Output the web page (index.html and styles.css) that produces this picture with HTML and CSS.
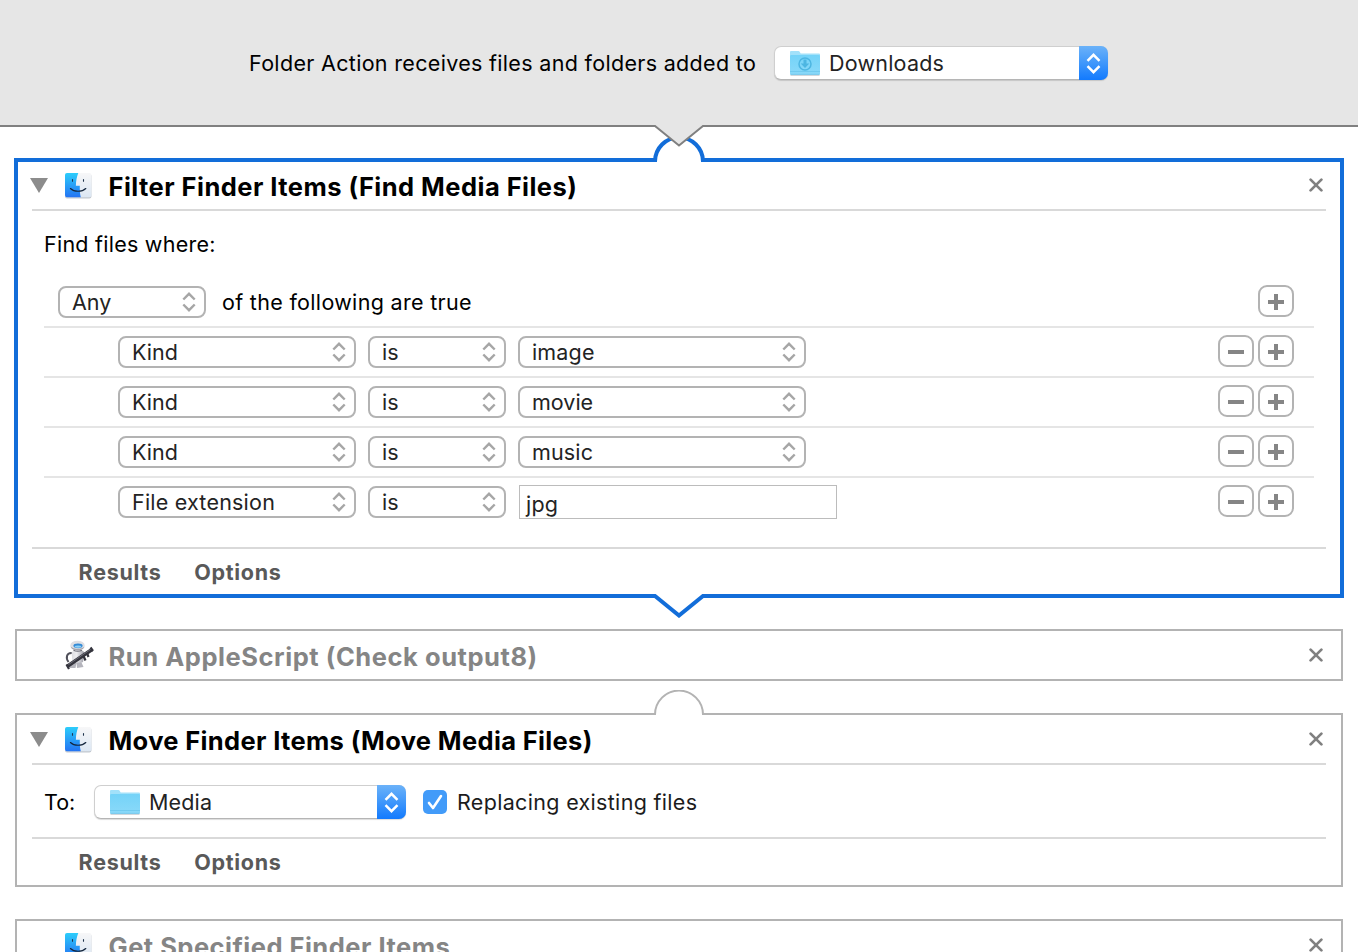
FILE: index.html
```html
<!DOCTYPE html>
<html lang="en">
<head>
<meta charset="utf-8">
<title>Folder Action workflow</title>
<link rel="stylesheet" href="styles.css">
</head>
<body>
<svg class="defs" aria-hidden="true">
  <defs>
    <linearGradient id="gBlue" x1="0" y1="0" x2="0" y2="1"><stop offset="0" stop-color="#2ccdfb"/><stop offset="1" stop-color="#2474f3"/></linearGradient>
    <linearGradient id="gPale" x1="0" y1="0" x2="0" y2="1"><stop offset="0" stop-color="#f7f7f8"/><stop offset="1" stop-color="#dce7f3"/></linearGradient>
    <linearGradient id="gFolder" x1="0" y1="0" x2="0" y2="1"><stop offset="0" stop-color="#74d3f8"/><stop offset="1" stop-color="#8ad9f9"/></linearGradient>
    <linearGradient id="gBody" x1="0" y1="0" x2="1" y2="0"><stop offset="0" stop-color="#dcdce0"/><stop offset=".4" stop-color="#ededf0"/><stop offset="1" stop-color="#9a9aa4"/></linearGradient>
    <symbol id="finder" viewBox="0 0 28 27">
      <rect x="1" y="1.800" width="26.400" height="24.600" rx="2" fill="#a9b1ba" opacity=".7"/>
      <rect x="1" y="1" width="26.400" height="24.200" rx="2" fill="url(#gPale)"/>
      <path d="M3 1H14.300C12.700 5 12 9 11.900 13.800H15.800C15.700 18 15.900 21.500 16.800 25.200H3A2 2 0 0 1 1 23.200V3A2 2 0 0 1 3 1Z" fill="url(#gBlue)"/>
      <path d="M8.500 7.500V9.300M19.500 7.500V9.300" stroke="#20344d" stroke-width="1.100" stroke-linecap="round"/>
      <path d="M6.400 16.500C10.200 20.200 18 20.200 21.800 16.500" fill="none" stroke="#14263d" stroke-width="1.100" stroke-linecap="round"/>
    </symbol>
    <symbol id="robot" viewBox="0 0 30 30">
      <path d="M8 13C2.500 12.500 1.500 18 4.500 22" fill="none" stroke="#50505a" stroke-width="2"/>
      <path d="M7.500 12.500C9 9.500 18 9 20.500 12.500L19 22Q13 25 8.500 22Z" fill="url(#gBody)"/>
      <path d="M7 23H12.500L11.500 28H5.500ZM12.500 22.500H17.500L19.500 27L13 28Z" fill="#b4b4bc"/>
      <path d="M9.500 10.300Q13.500 12.200 18 10.300" fill="none" stroke="#6f6f78" stroke-width="1.200"/>
      <ellipse cx="13.500" cy="5.500" rx="7.200" ry="4.800" fill="#dfdfe3"/>
      <path d="M6.500 6.500C8 12 19 12 20.500 6.500C17.500 9.800 10 9.800 6.500 6.500Z" fill="#a5a5ad"/>
      <ellipse cx="14" cy="5.800" rx="4.600" ry="2.400" fill="#328ad6"/>
      <ellipse cx="14" cy="6.600" rx="3.300" ry="1.200" fill="#8fd0f5"/>
      <path d="M3 26.500L28 9.500" stroke="#34343d" stroke-width="3.800"/>
      <path d="M2.500 24.500L5 29M19.500 16L21.500 20.500M23 13L24.500 17M26.500 7.500L29 11" stroke="#34343d" stroke-width="2.200"/>
      <path d="M4.500 24.500L26.500 9.500" stroke="#85858f" stroke-width=".7"/>
    </symbol>
    <symbol id="folder" viewBox="0 0 32 27">
      <path d="M1.500 25.200H30.500" stroke="#7d8f99" stroke-width="1" opacity=".5"/>
      <path d="M1 2Q1 1 2 1H9.500Q10.300 1 10.800 2L11.700 3.500H30Q31 3.500 31 4.500V12H1Z" fill="#a2e1fa"/>
      <path d="M1 6.500Q1 5 2 5H30Q31 5 31 6V23.700Q31 24.700 30 24.700H2Q1 24.700 1 23.700Z" fill="url(#gFolder)"/>
      <path d="M1 21.500H31" stroke="#68c4eb" stroke-width=".7"/><path d="M1.500 24.400H30.500" stroke="#68c0e6" stroke-width=".7"/>
    </symbol>
    <symbol id="chev" viewBox="0 0 14 20">
      <path d="M1.300 7.500L7 1.800L12.700 7.500M1.300 12.500L7 18.200L12.700 12.500" fill="none" stroke="currentColor" stroke-width="2.400"/>
    </symbol>
    <symbol id="close" viewBox="0 0 14 14">
      <path d="M1.600 1.600L12.400 12.400M12.400 1.600L1.600 12.400" stroke="#808080" stroke-width="2.700" stroke-linecap="round"/>
    </symbol>
    <symbol id="plus" viewBox="0 0 16 16"><path d="M0 8H16M8 0V16" stroke="#858585" stroke-width="4"/></symbol>
    <symbol id="minus" viewBox="0 0 16 16"><path d="M0 8H16" stroke="#858585" stroke-width="4"/></symbol>
  </defs>
</svg>

<header class="trigger">
  <span class="t-trigger">Folder Action receives files and folders added to</span>
  <div class="popup popup-downloads">
    <svg class="folder" viewBox="0 0 32 27"><use href="#folder"/><circle cx="16" cy="14" r="6" fill="none" stroke="#4db6e2" stroke-width="1.500"/><path d="M14.500 9.500H17.500V13.500H20.300L16 18L11.700 13.500H14.500Z" fill="#4db6e2"/></svg>
    <span class="t-downloads">Downloads</span>
    <i class="cap"><svg class="chev"><use href="#chev"/></svg></i>
  </div>
  <svg class="notch" viewBox="0 0 56 24"><path d="M3 0L4 1L28 21L52 1L53 0Z" fill="#e6e6e6"/><path d="M0 1H4L28 20.500L52 1H56" fill="none" stroke="#808080" stroke-width="2"/></svg>
</header>

<main class="flow">
  <section class="card selected">
    <svg class="socket" viewBox="0 0 56 30"><path d="M4 22H52V30H4Z" fill="#fff"/><path d="M4 28V27.500A24 24 0 0 1 52 27.500V28" fill="#fff" stroke="#126dd9" stroke-width="4"/></svg>
    <div class="head"><i class="tri"></i><svg class="app"><use href="#finder"/></svg><h2 class="t-filter">Filter Finder Items (Find Media Files)</h2><svg class="close"><use href="#close"/></svg></div>
    <div class="rules">
      <p class="t-find">Find files where:</p>
      <div class="rule first"><div class="sel w-any"><span class="t-any">Any</span><svg class="chev"><use href="#chev"/></svg></div><span class="after t-of">of the following are true</span><div class="btns"><button><svg><use href="#plus"/></svg></button></div></div>
      <div class="rule"><div class="sel w-kind"><span class="t-kind">Kind</span><svg class="chev"><use href="#chev"/></svg></div><div class="sel w-is"><span class="t-is">is</span><svg class="chev"><use href="#chev"/></svg></div><div class="sel w-val"><span class="t-image">image</span><svg class="chev"><use href="#chev"/></svg></div><div class="btns"><button><svg><use href="#minus"/></svg></button><button><svg><use href="#plus"/></svg></button></div></div>
      <div class="rule"><div class="sel w-kind"><span class="t-kind">Kind</span><svg class="chev"><use href="#chev"/></svg></div><div class="sel w-is"><span class="t-is">is</span><svg class="chev"><use href="#chev"/></svg></div><div class="sel w-val"><span class="t-movie">movie</span><svg class="chev"><use href="#chev"/></svg></div><div class="btns"><button><svg><use href="#minus"/></svg></button><button><svg><use href="#plus"/></svg></button></div></div>
      <div class="rule"><div class="sel w-kind"><span class="t-kind">Kind</span><svg class="chev"><use href="#chev"/></svg></div><div class="sel w-is"><span class="t-is">is</span><svg class="chev"><use href="#chev"/></svg></div><div class="sel w-val"><span class="t-music">music</span><svg class="chev"><use href="#chev"/></svg></div><div class="btns"><button><svg><use href="#minus"/></svg></button><button><svg><use href="#plus"/></svg></button></div></div>
      <div class="rule last"><div class="sel w-kind"><span class="t-ext">File extension</span><svg class="chev"><use href="#chev"/></svg></div><div class="sel w-is"><span class="t-is">is</span><svg class="chev"><use href="#chev"/></svg></div><div class="field"><span class="t-jpg">jpg</span></div><div class="btns"><button><svg><use href="#minus"/></svg></button><button><svg><use href="#plus"/></svg></button></div></div>
    </div>
    <div class="foot"><span class="t-results">Results</span><span class="t-options">Options</span></div>
    <svg class="plug" viewBox="0 0 56 26"><path d="M4 0H52V4L28 20L4 4Z" fill="#fff"/><path d="M0 4H4L28 23.500L52 4H56" fill="none" stroke="#126dd9" stroke-width="4"/></svg>
  </section>

  <section class="card collapsed">
    <div class="head"><i class="tri none"></i><svg class="app robot"><use href="#robot"/></svg><h2 class="t-run dim">Run AppleScript (Check output8)</h2><svg class="close"><use href="#close"/></svg></div>
  </section>

  <section class="card move">
    <svg class="socket grey" viewBox="0 0 56 26"><path d="M4 22H52V26H4Z" fill="#fff"/><path d="M4 25V24.600A24 24 0 0 1 52 24.600V25" fill="#fff" stroke="#b3b3b3" stroke-width="2"/></svg>
    <div class="head"><i class="tri"></i><svg class="app"><use href="#finder"/></svg><h2 class="t-move">Move Finder Items (Move Media Files)</h2><svg class="close"><use href="#close"/></svg></div>
    <div class="dest">
      <span class="to"><span class="t-to">To:</span></span>
      <div class="popup popup-media"><svg class="folder"><use href="#folder"/></svg><span class="t-media">Media</span><i class="cap"><svg class="chev"><use href="#chev"/></svg></i></div>
      <svg class="check" viewBox="0 0 24 24"><rect width="24" height="24" rx="5" fill="#429bf9"/><path d="M6 13L10 18L18 6" fill="none" stroke="#fff" stroke-width="2.600" stroke-linecap="round" stroke-linejoin="round"/></svg>
      <span class="t-replace">Replacing existing files</span>
    </div>
    <div class="foot"><span class="t-results">Results</span><span class="t-options">Options</span></div>
  </section>

  <section class="card collapsed">
    <div class="head"><i class="tri none"></i><svg class="app"><use href="#finder"/></svg><h2 class="t-get dim">Get Specified Finder Items</h2><svg class="close"><use href="#close"/></svg></div>
  </section>
</main>
</body>
</html>
```
FILE: styles.css
```css
* { box-sizing: border-box; }
html, body { margin: 0; height: 952px; overflow: hidden; background: #fff; }
body { font: 21.5px/26px Inter, "Liberation Sans", sans-serif; color: #000; white-space: nowrap; }
svg { display: block; flex: none; }
.defs { position: absolute; width: 0; height: 0; }
p, h2 { margin: 0; }

.trigger { position: relative; z-index: 2; height: 127px; padding: 46px 0 0 249px; display: flex; align-items: flex-start; background: #e6e6e6; border-bottom: 2px solid #808080; }
.trigger > span { width: 525px; line-height: 34px; }
.notch { position: absolute; left: 651px; top: 125px; width: 56px; height: 24px; }

.popup { display: flex; align-items: center; height: 34px; padding-left: 14px; border-radius: 7px; background: #fff; border: 1px solid #cfcfcf; border-bottom-color: #b5b5b5; box-shadow: 0 1px 1px rgba(0,0,0,.14); color: #232323; }
.popup-downloads { width: 334px; }
.popup-media { width: 312px; }
.folder { width: 32px; height: 27px; margin: 1px 8px 0 0; }
.cap { display: flex; align-items: center; justify-content: center; width: 29px; height: 34px; margin: -1px -1px -1px auto; border-radius: 0 7px 7px 0; background: linear-gradient(#6bb2f9, #3f97fb 50%, #127afe); color: #fff; }
.chev { width: 14px; height: 20px; }
.cap .chev { width: 15px; height: 21px; }

.t-trigger { letter-spacing: .32px; }
.t-downloads, .t-ext, .t-jpg { letter-spacing: .21px; }
.t-find { letter-spacing: .25px; }
.t-of, .t-replace { letter-spacing: .32px; }
.t-image, .t-music, .t-media { letter-spacing: .15px; }

.flow { padding: 31px 14px 0; }
.card { position: relative; background: #fff; border: 2px solid #b3b3b3; margin: 0 1px 32px; }
.selected { border: 4px solid #126dd9; height: 440px; margin: 0 0 31px; }
.head { display: flex; align-items: flex-start; height: 50px; margin: 0 15px; padding-top: 11px; border-bottom: 2px solid #d9d9d9; }
.selected .head { height: 49px; margin: 0 14px; padding-top: 10px; }
.collapsed .head { height: 48px; border-bottom: 0; }
.tri { width: 18px; height: 15px; margin: 6px 16px 0 -2px; background: #8c8c8c; clip-path: polygon(0 0, 100% 0, 50% 100%); }
.tri.none { visibility: hidden; }
.app { width: 28px; height: 27px; }
.robot { width: 30px; height: 30px; margin: -2px -2px 0 0; }
h2 { margin-left: 16.5px; font-size: 25.5px; line-height: 30px; font-weight: 700; }
.t-filter { letter-spacing: .46px; }
.t-run { letter-spacing: .55px; }
.t-move { letter-spacing: .35px; }
.t-get { letter-spacing: .49px; }
.dim { color: #858585; }
.close { width: 14px; height: 14px; margin: 6px 3px 0 auto; }

.rules { height: 336px; padding: 20px 26px 0; }
.rules p { height: 47px; }
.rule { display: flex; align-items: flex-start; height: 50px; padding: 8px 20px 0 74px; border-bottom: 2px solid #e5e5e5; }
.rule.first { padding-left: 14px; }
.rule.last { border-bottom: 0; }
.sel { display: flex; align-items: center; justify-content: space-between; height: 32px; margin-right: 12px; padding: 0 8px 0 12px; border: 2px solid #b3b3b3; border-radius: 8px; color: #232323; }
.sel .chev { color: #a6a6a6; }
.w-any { width: 148px; margin-right: 16px; }
.w-kind { width: 238px; }
.w-is { width: 138px; }
.w-val { width: 288px; }
.after { line-height: 32px; }
.field { width: 318px; height: 34px; margin: -1px 0 0 1px; padding: 5px 0 0 6px; border: 1px solid #bcbcbc; color: #232323; }
.btns { display: flex; gap: 4px; margin: -1px 0 0 auto; }
button { display: flex; justify-content: center; width: 36px; height: 32px; padding: 7px 0 0; border: 2px solid #b3b3b3; border-radius: 9px; background: #fff; }
button svg { width: 16px; height: 16px; }

.foot { display: flex; height: 46px; margin: 0 15px; padding: 10px 0 0 46.6px; color: #595959; font-weight: 700; letter-spacing: .7px; border-top: 2px solid #d9d9d9; }
.selected .foot { height: 47px; margin: 0 14px; }
.foot .t-results { width: 115.6px; }
.socket, .plug { position: absolute; left: 633px; width: 56px; }
.socket { top: -28px; height: 30px; }
.plug { top: 430px; height: 26px; }
.socket.grey { left: 634px; top: -25px; height: 26px; }

.move { height: 174px; }
.dest { display: flex; align-items: center; height: 72px; margin-left: 27px; padding-top: 2px; }
.to { width: 50px; }
.check { width: 24px; height: 24px; margin: 0 10px 0 17px; }
.t-replace { color: #1c1c1c; }
```
